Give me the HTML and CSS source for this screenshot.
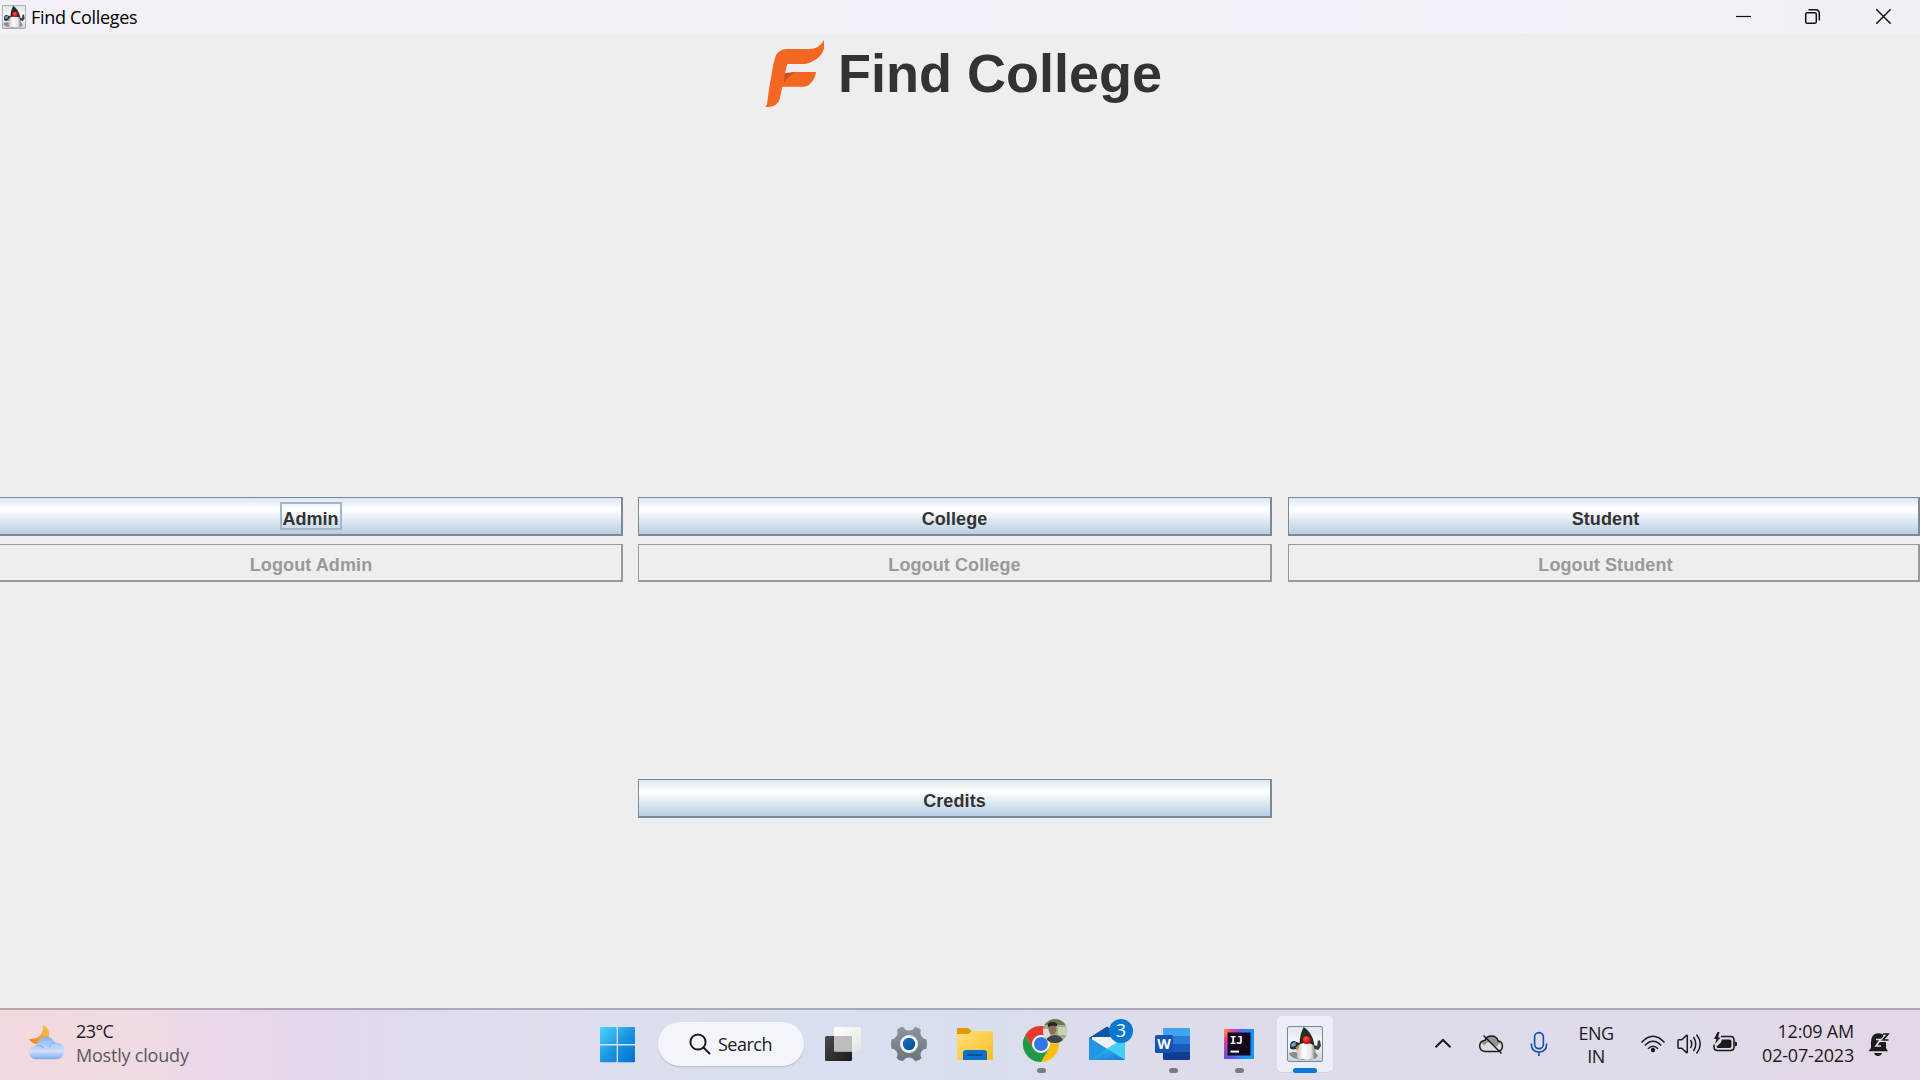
FILE: index.html
```html
<!DOCTYPE html>
<html lang="en">
<head>
<meta charset="utf-8">
<title>Find Colleges</title>
<link rel="stylesheet" href="styles.css">
</head>
<body>
<svg class="defs" width="0" height="0" aria-hidden="true">
  <defs>
    <linearGradient id="dukeBg" x1="0" y1="0" x2="0" y2="1"><stop offset="0" stop-color="#dfe4e8"/><stop offset=".5" stop-color="#fbfbfb"/><stop offset="1" stop-color="#c9cfd4"/></linearGradient>
    <linearGradient id="dukeBody" x1="0" y1="0" x2="1" y2="0"><stop offset="0" stop-color="#bdbdbd"/><stop offset=".35" stop-color="#fff"/><stop offset=".75" stop-color="#e4e4e4"/><stop offset="1" stop-color="#777"/></linearGradient>
    <radialGradient id="dukeNose" cx=".4" cy=".35"><stop offset="0" stop-color="#ff5a4a"/><stop offset="1" stop-color="#d90e12"/></radialGradient>
  </defs>
  <symbol id="duke" viewBox="0 0 108 108">
    <rect x="1.5" y="1.5" width="105" height="105" rx="5" fill="url(#dukeBg)" stroke="#6c8aa3" stroke-width="3"/>
    <path d="M6 82 Q22 72 36 84 L82 78 Q100 88 86 97 Q60 106 32 99 Q8 94 6 82Z" fill="#5d5d5d" opacity=".65"/>
    <path d="M10 52 Q16 42 27 47 L39 52 36 64 Q20 76 9 67Z" fill="#2b2e32"/>
    <path d="M13 54 Q20 47 27 50 L25 60 14 63Z" fill="#62a6e4"/>
    <path d="M26 64 L38 54 38 66 29 74Z" fill="#b98a46"/>
    <path d="M74 57 L91 59 92 44 99 43 102 60 94 72 78 68Z" fill="#3b3b3b"/>
    <path d="M40 52 Q30 74 29 94 Q36 103 47 98 Q60 104 73 98 Q83 102 86 93 Q88 72 74 48Z" fill="url(#dukeBody)"/>
    <path d="M50 3 Q68 14 78 39 L83 59 Q65 46 37 55 Q39 24 50 3Z" fill="#292929"/>
    <circle cx="59" cy="42" r="12" fill="url(#dukeNose)"/>
  </symbol>
</svg>

<header class="titlebar">
  <svg class="titlebar-icon" width="24" height="24"><use href="#duke"/></svg>
  <span class="titlebar-text">Find Colleges</span>
  <svg class="window-controls" width="220" height="34" viewBox="1700 0 220 34" fill="none" stroke="#111">
    <path d="M1736 16.5h15" stroke-width="1.2"/>
    <rect x="1805.7" y="12.7" width="10.6" height="10.6" rx="1.6" stroke-width="1.5"/>
    <path d="M1808.5 9.8h7q3.8 0 3.8 3.8v7" stroke-width="1.5"/>
    <path d="M1876.3 9.3l14.4 14.4M1890.7 9.3l-14.4 14.4" stroke-width="1.5"/>
  </svg>
</header>

<main class="window">
  <div class="brand">
    <svg width="63" height="71" viewBox="66 51 189 213">
      <path d="M249 57V83Q241 108 217 119 203 129 182 129H139L132 157 160 153H225Q224 172 206 190 200 197 184 197H124L116 235Q108 257 84 258L73 258 78 250 84 205 97 130 103 108Q111 85 137 84H205Q235 84 249 57Z" fill="#f26722"/>
      <path d="M132 157L162 154Q139 166 129 187Z" fill="#bf531f"/>
    </svg>
    <h1 class="brand-name">Find College</h1>
  </div>

  <div class="actions">
    <button class="btn first"><span class="focus">Admin</span></button>
    <button class="btn">College</button>
    <button class="btn last">Student</button>
    <button class="btn off first" disabled>Logout Admin</button>
    <button class="btn off" disabled>Logout College</button>
    <button class="btn off last" disabled>Logout Student</button>
  </div>

  <div class="footer-actions">
    <button class="btn">Credits</button>
  </div>
</main>

<footer class="taskbar">
  <section class="weather">
    <svg width="37" height="36" viewBox="87 74 111 108">
      <defs>
        <linearGradient id="moon" x1="0" y1="1" x2="1" y2="0"><stop offset="0" stop-color="#f08213"/><stop offset="1" stop-color="#fbc64b"/></linearGradient>
        <linearGradient id="cloud" x1="0" y1="0" x2="0" y2="1"><stop offset="0" stop-color="#86b0f2"/><stop offset=".65" stop-color="#cfe0f8"/><stop offset="1" stop-color="#7fa8ee"/></linearGradient>
      </defs>
      <path d="M129 76Q158 94 142 122 120 141 97 130 90 125 88 119 132 119 129 76Z" fill="url(#moon)"/>
      <path d="M107 180A21 21 0 1 1 109 138Q116 112 138 112 157 112 165 130A25 25 0 1 1 172 180Z" fill="url(#cloud)"/>
      <path d="M109 139Q123 136 130 147M147 144Q152 132 166 130" fill="none" stroke="#7da6e6" stroke-width="4" opacity=".7"/>
    </svg>
    <div class="weather-text">
      <div class="temp"><span>23°C</span></div>
      <div class="cond"><span>Mostly cloudy</span></div>
    </div>
  </section>

  <svg class="slot" viewBox="584 1008 66 72">
    <defs><linearGradient id="win" gradientUnits="userSpaceOnUse" x1="600" y1="1027" x2="635" y2="1062"><stop offset="0" stop-color="#4fd3ff"/><stop offset=".5" stop-color="#1c97e0"/><stop offset="1" stop-color="#006fd0"/></linearGradient></defs>
    <path d="M601 1027h15.7v17H600v-16q0-1 1-1zM618 1027h16q1 0 1 1v16h-17zM600 1045.400h16.700v16.800H601q-1 0-1-1zM618 1045.400h17v15.800q0 1-1 1h-16z" fill="url(#win)"/>
  </svg>

  <div class="search">
    <svg width="22" height="22" viewBox="0 0 22 22" fill="none" stroke="#1b1b1b" stroke-width="2"><circle cx="9" cy="9" r="7.600"/><path d="M14.500 14.500l6 6" stroke-linecap="round"/></svg>
    <span>Search</span>
  </div>

  <svg class="slot" viewBox="810 1008 66 72">
    <defs><linearGradient id="tvd" x1="0" y1="0" x2="1" y2="1"><stop offset="0" stop-color="#4a4a4a"/><stop offset="1" stop-color="#1c1c1c"/></linearGradient><linearGradient id="tvl" x1="0" y1="0" x2="1" y2="1"><stop offset="0" stop-color="#fff"/><stop offset="1" stop-color="#e4e4e4"/></linearGradient></defs>
    <rect x="825" y="1036" width="27" height="25" rx="1.500" fill="url(#tvd)"/>
    <rect x="834" y="1027" width="27" height="24.500" rx="1.500" fill="url(#tvl)"/>
    <path d="M834 1036h18v15.500h-17q-1 0-1-1z" fill="#bdbdbd"/>
  </svg>

  <svg class="slot" viewBox="876 1008 66 72">
    <defs><linearGradient id="gear" x1="0" y1="0" x2="0" y2="1"><stop offset="0" stop-color="#8b959e"/><stop offset="1" stop-color="#69747d"/></linearGradient><linearGradient id="hub" x1="0" y1="0" x2="1" y2="1"><stop offset="0" stop-color="#0f75cb"/><stop offset="1" stop-color="#084a94"/></linearGradient></defs>
    <path d="M900 1027.500L903 1026.800Q904.500 1030.500 909 1030.500T915 1026.800L918.500 1028 921 1030Q919.500 1034 922 1037 923.500 1039.200 926.500 1039.500L927 1044 926.500 1048.500Q923 1049 921.500 1051.500 919.500 1054.500 921.500 1058L919 1060 915 1061.200Q913 1057.500 909 1057.500T903 1061.200L899 1060 896.500 1058Q898.500 1054.500 896.500 1051.500 895 1049 891.500 1048.500L891 1044 891.500 1039.500Q894.500 1039.200 896 1037 898.500 1034 897 1030Z" fill="url(#gear)"/>
    <circle cx="909" cy="1044" r="9" fill="#f3f5f7"/><circle cx="909" cy="1044" r="6.200" fill="url(#hub)"/>
  </svg>

  <svg class="slot" viewBox="942 1008 66 72">
    <defs><linearGradient id="fold" x1="0" y1="0" x2="1" y2="1"><stop offset="0" stop-color="#ffe07c"/><stop offset="1" stop-color="#fbbf23"/></linearGradient></defs>
    <path d="M957 1029q0-1 1-1h9.500q1 0 1.800.8l2.700 2.600V1036h-15z" fill="#dd9b05"/>
    <path d="M957 1034h11.500l3.300-3H992q1 0 1 1v28h-36z" fill="url(#fold)"/>
    <path d="M963 1060v-7q0-3 3-3h18q3 0 3 3v7z" fill="#0b6fc7"/>
    <path d="M967.500 1055h14" stroke="#06468b" stroke-width="1.500" stroke-linecap="round"/>
  </svg>

  <svg class="slot" viewBox="1008 1008 66 72">
    <defs><clipPath id="avatar"><circle cx="1055" cy="1031" r="12"/></clipPath></defs>
    <circle cx="1041" cy="1044" r="18" fill="#fbbf16"/>
    <path d="M1025.400 1035A18 18 0 0 1 1056.600 1035H1041L1033.200 1048.500Z" fill="#e53a2f"/>
    <path d="M1025.400 1035A18 18 0 0 0 1041 1062L1048.800 1048.500 1041 1050 1033.200 1048.500Z" fill="#22984a"/>
    <circle cx="1041" cy="1044" r="9" fill="#fff"/><circle cx="1041" cy="1044" r="7" fill="#2f78ea"/>
    <g clip-path="url(#avatar)">
      <path d="M1043 1019h24v24h-24z" fill="#a3ad8c"/>
      <path d="M1043 1019h24v6h-24z" fill="#69774e"/><path d="M1058 1027h9v8h-9z" fill="#c9d0b2"/>
      <path d="M1043 1029h7v9h-7z" fill="#ded8d6"/>
      <path d="M1046 1043q0-7 8-8 8 0 10 8z" fill="#3c4650"/>
      <ellipse cx="1052.500" cy="1029" rx="4" ry="5.500" fill="#8f6d5a"/>
      <path d="M1048 1027q-1-5 4.500-5t4.500 4q-4-1-9 1z" fill="#262321"/>
    </g>
    <rect x="1037" y="1068" width="9" height="5" rx="2.500" fill="#7c7b84"/>
  </svg>

  <svg class="slot" viewBox="1074 1008 66 72">
    <defs><linearGradient id="mail" x1="0" y1="0" x2="1" y2="1"><stop offset="0" stop-color="#35bdf2"/><stop offset="1" stop-color="#1479d2"/></linearGradient></defs>
    <path d="M1089 1038L1107 1026.500 1125 1038V1046H1089z" fill="#0a57a8"/>
    <path d="M1092 1037h30v13h-30z" fill="#f1f1f3"/>
    <path d="M1089 1037.500L1125 1060H1089z" fill="#1f97e2"/>
    <path d="M1125 1037.500V1060L1107 1048.500z" fill="#45cdf5"/>
    <path d="M1089 1060L1107 1048.500 1125 1060z" fill="url(#mail)"/>
    <circle cx="1121" cy="1031" r="12" fill="#0878d1"/>
    <text class="badge" x="1121" y="1037">3</text>
  </svg>

  <svg class="slot" viewBox="1140 1008 66 72">
    <path d="M1163 1037v-8q0-1 1-1h25q1 0 1 1v8z" fill="#43a3ee"/>
    <path d="M1163 1036h27v8h-27z" fill="#2c7cd5"/><path d="M1163 1044h27v8h-27z" fill="#185abd"/>
    <path d="M1163 1052h27v7q0 1-1 1h-25q-1 0-1-1z" fill="#113f8f"/>
    <rect x="1155" y="1035" width="18" height="18" rx="1.500" fill="#1853b3"/>
    <text class="word-w" x="1164" y="1048.700">W</text>
    <rect x="1169" y="1068" width="9" height="5" rx="2.500" fill="#7c7b84"/>
  </svg>

  <svg class="slot" viewBox="1206 1008 66 72">
    <defs><linearGradient id="ij" x1="0" y1="0" x2="1" y2=".5"><stop offset="0" stop-color="#fc9a3c"/><stop offset=".2" stop-color="#f4487c"/><stop offset=".4" stop-color="#7d55e8"/><stop offset=".65" stop-color="#1e8af2"/><stop offset="1" stop-color="#1496f5"/></linearGradient><linearGradient id="ijl" x1="0" y1="0" x2="0" y2="1"><stop offset="0" stop-color="#fb8a48"/><stop offset=".3" stop-color="#e83f93"/><stop offset="1" stop-color="#5a55ea"/></linearGradient></defs>
    <rect x="1224" y="1029" width="30" height="30" fill="url(#ij)"/>
    <path d="M1224 1032l4 0v23l14 4h-18z" fill="url(#ijl)"/>
    <rect x="1227.500" y="1032.500" width="23" height="23" fill="#16061c"/>
    <text class="ij" x="1229.700" y="1044">IJ</text>
    <path d="M1230.500 1051.600h8.500" stroke="#fff" stroke-width="2"/>
    <rect x="1235" y="1068" width="9" height="5" rx="2.500" fill="#7c7b84"/>
  </svg>

  <svg class="slot" viewBox="1272 1008 66 72">
    <rect x="1277" y="1016" width="56" height="57" rx="5" fill="#d4d1df"/>
    <rect x="1277" y="1016" width="56" height="56" rx="5" fill="#eeecf6"/>
    <use href="#duke" x="1287" y="1026" width="36" height="36"/>
    <rect x="1293" y="1068" width="24" height="5" rx="2.500" fill="#0879d6"/>
  </svg>

  <section class="tray">
    <svg width="142" height="72" viewBox="1420 1008 142 72" fill="none" stroke="#1b1b1b">
      <path d="M1435.500 1047.300l7.500-7.300 7.500 7.300" stroke-width="2"/>
      <path d="M1485 1051.400q-5.300-.5-5.300-5.400 0-5 5.300-5.700 1.500-4.300 6.500-4.300 5.200 0 6.600 5 4.300.4 4.300 5t-4.400 5.400z" fill="#dedede" stroke="none"/>
      <path d="M1480.500 1043q1.500-2.500 4.500-2.700 1.500-4.300 6.500-4.300 5.200 0 6.600 5l2.900.9-5 5.100-5-4.500q-5-1-6 3z" fill="#949494" stroke="none"/>
      <path d="M1485 1051.400q-5.300-.5-5.300-5.400 0-5 5.300-5.700 1.500-4.300 6.500-4.300 5.200 0 6.600 5 4.300.4 4.300 5t-4.400 5.400z" stroke-width="1.500"/>
      <path d="M1483.500 1035.500l18 18" stroke-width="1.500"/>
      <rect x="1534.600" y="1032.600" width="8.800" height="16" rx="4.400" stroke="#134fa4" stroke-width="1.600"/>
      <path d="M1531.300 1043.500q0 8.500 7.700 8.500t7.700-8.500M1539 1052v4" stroke="#134fa4" stroke-width="1.600"/>
    </svg>
    <div class="lang"><div><span>ENG</span></div><div>IN</div></div>
    <svg width="115" height="72" viewBox="1630 1008 115 72" fill="none" stroke="#1b1b1b" stroke-width="1.500">
      <path d="M1641.500 1042.500Q1653 1030 1664.500 1042.500M1644.800 1045.500Q1653 1037.200 1661.200 1045.500M1648 1048.700Q1653 1043.700 1658 1048.700"/>
      <circle cx="1653" cy="1050" r="2.200" fill="#1b1b1b" stroke="none"/>
      <path d="M1678 1040.500v7q0 .8.800.8h2.900l4.800 4.300q.8.500.8-.5v-16.200q0-1-.8-.5l-4.800 4.300h-2.900q-.8 0-.8.800zM1690.500 1040q2.500 4 0 8M1693.500 1037q4.500 7 0 14M1696.500 1034.500q7.500 9.500 0 19"/>
      <path d="M1721 1036.500h9.500q3.500 0 3.500 3.500v7q0 3.500-3.500 3.500h-13q-3.500 0-3.500-3.500v-2.500" stroke-width="1.600"/>
      <path d="M1722 1039.500h7.500q2 0 2 2v4.500q0 2-2 2h-11q-2 0-2-1.500l4-3.500zM1735 1041.500l2 1v3l-2 1zM1717.500 1032l-3.500 7h2.500l-1.500 5 5.500-6.500h-2.500l1.500-5.500z" fill="#1b1b1b" stroke="none"/>
    </svg>
    <div class="clock"><div><span class="time">12:09 AM</span></div><div><span class="date">02-07-2023</span></div></div>
    <svg width="66" height="72" viewBox="1854 1008 66 72">
      <path d="M1871 1048v-6q0-8.500 7.500-8.700 7.500 0 7.500 8.700v6l2 3.200H1868.500zM1874 1053h8q-1 3-4 3t-4-3z" fill="#1b1b1b"/>
      <path d="M1876 1039.500h4.500l-4.500 6.500h5" fill="none" stroke="#e2d8e8" stroke-width="1.600"/>
      <path d="M1883 1034h5l-5 6h5.500" fill="none" stroke="#e2d8e8" stroke-width="4"/>
      <path d="M1883 1034h5l-5 6h5.500" fill="none" stroke="#1b1b1b" stroke-width="1.700"/>
    </svg>
  </section>
</footer>
</body>
</html>
```

FILE: styles.css
```css
* { box-sizing: border-box; }

body {
  margin: 0;
  width: 1920px;
  height: 1080px;
  overflow: hidden;
  display: flex;
  flex-direction: column;
  background: #eee;
  font-family: "Open Sans", "Noto Sans", sans-serif;
  font-size: 18px;
  color: #1b1b1b;
}

svg { display: block; flex: none; }

.titlebar {
  height: 34px;
  flex: none;
  display: flex;
  align-items: center;
  padding-left: 2px;
  background: linear-gradient(90deg, #f3f0f8, #f3f0f8 40%, #f0f3f9 80%, #f2f0f7 93%);
}
.titlebar-text {
  margin-left: 5px;
  line-height: 24px;
  padding-bottom: 1px;
  color: #000;
  letter-spacing: -0.32px;
}
.window-controls { margin-left: auto; }

.window {
  flex: 1;
  display: flex;
  flex-direction: column;
  font-family: "Liberation Sans", Arial, sans-serif;
}

.brand {
  display: flex;
  align-items: center;
  gap: 12px;
  height: 78px;
  padding-left: 763px;
}
.brand-name {
  margin: 0;
  font-size: 54px;
  line-height: 62px;
  font-weight: bold;
  color: #333;
  white-space: nowrap;
}

.actions {
  margin-top: 385px;
  display: grid;
  grid-template-columns: 623px 634px 633px;
  grid-template-rows: 39px 38px;
  column-gap: 15px;
  row-gap: 8px;
}
.btn {
  margin: 0;
  padding: 5px 0 0;
  border: solid #7a8a99;
  border-width: 1px 2px 2px 1px;
  border-radius: 0;
  background: linear-gradient(#dbe6f1 0%, #fff 30%, #fff 34%, #dbe6f0 66%, #b8cfe5 100%);
  font: bold 18px/20px "Liberation Sans", Arial, sans-serif;
  letter-spacing: 0.1px;
  color: #333;
}
.btn.first { border-left: 0; }
.btn.last { margin-left: 1px; padding-left: 4px; }
.btn.off {
  border-color: #999;
  background: none;
  color: #999;
  padding-top: 4px;
}
.btn.off.first { padding-left: 1px; }
.focus {
  display: inline-block;
  height: 28px;
  margin-top: -5px;
  padding: 5px 1px 0;
  border: 2px solid #a3b8cc;
  letter-spacing: 0;
}

.footer-actions {
  margin-top: 197px;
  padding-left: 638px;
  display: grid;
  grid-template-columns: 634px;
  grid-template-rows: 39px;
}

.taskbar {
  height: 72px;
  flex: none;
  display: flex;
  align-items: stretch;
  box-shadow: inset 0 2px rgba(120, 110, 130, .48);
  background: linear-gradient(90deg, #f3d9dd 0, #eedbe3 140px, #ead7ea 220px, #e4d8ec 310px, #dddeed 560px, #d8dfee 800px, #d9deed 1000px, #dedbea 1200px, #dedaea 1450px, #dedbeb 1620px, #e2d9e8 1760px, #e3d7e6 1920px);
}
.weather {
  width: 584px;
  flex: none;
  display: flex;
  padding: 11px 0 0 29px;
}
.weather svg { margin-top: 5px; }
.weather-text { margin-left: 10px; line-height: 24px; }
.temp { letter-spacing: -0.6px; }
.cond { color: #5d5861; letter-spacing: -0.2px; }

.slot { width: 66px; height: 72px; }

.search {
  width: 146px;
  height: 44px;
  flex: none;
  margin: 14px 6px 0 8px;
  padding-left: 31px;
  display: flex;
  align-items: center;
  border-radius: 22px;
  background: #f3f5fb;
  box-shadow: 0 1.500px 1px rgba(140, 150, 180, .35);
}
.search span { margin-left: 7px; line-height: 24px; letter-spacing: -0.5px; }

.badge { font: 18px "Open Sans", sans-serif; fill: #fff; text-anchor: middle; }
.word-w { font: bold 14px "Open Sans", sans-serif; fill: #fff; text-anchor: middle; }
.ij { font: bold 11px "DejaVu Sans Mono", monospace; fill: #fff; }

.tray { margin-left: auto; display: flex; }
.lang {
  width: 68px;
  padding-top: 14px;
  text-align: center;
  line-height: 23px;
  letter-spacing: -0.5px;
}
.clock {
  width: 109px;
  padding-top: 11px;
  text-align: right;
  line-height: 24px;
  white-space: nowrap;
  letter-spacing: -0.2px;
}
```
